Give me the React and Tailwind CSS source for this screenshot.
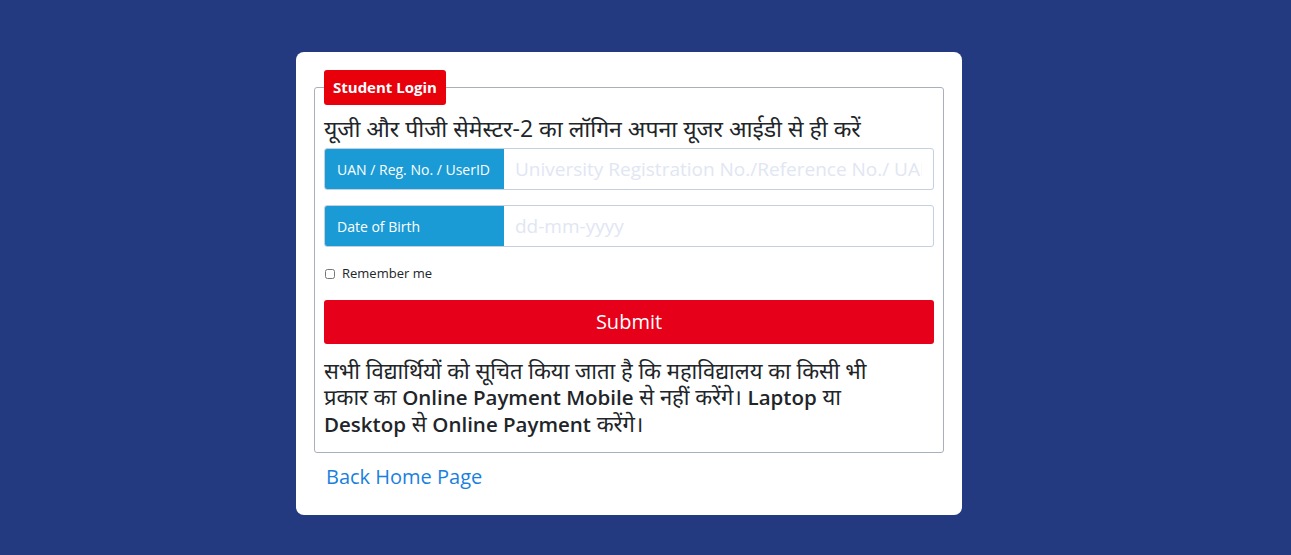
import React, { useState } from 'react';

const App = () => {
  const [remember, setRemember] = useState(false);

  return (
    <div
      className="min-h-[555px] w-full bg-[#243a80] pt-[52px]"
      style={{ fontFamily: '"Open Sans", "Noto Sans", "Liberation Sans", sans-serif' }}
    >
      <div className="ml-[296px] w-[666px] rounded-lg bg-white px-[18px] pb-[24px] pt-[18px]">
        <fieldset className="rounded-[3px] border border-[#a9b0bd] px-[9px] pb-[16px]">
          <legend className="rounded-[3px] bg-[#e8000b] px-[9px] py-[7px] text-[15px] font-bold leading-[21px] text-white">
            Student Login
          </legend>
          <p className="mt-[7px] text-[23px] leading-[32px] text-[#212529]">
            यूजी और पीजी सेमेस्टर-2 का लॉगिन अपना यूजर आईडी से ही करें
          </p>

          <div className="mt-[4px] flex h-[42px] overflow-hidden rounded-[3px] border border-[#c5cfe0]">
            <span className="flex w-[179px] shrink-0 items-center bg-[#1a9bd6] px-[12px] text-[14px] text-white">
              UAN / Reg. No. / UserID
            </span>
            <input
              type="text"
              placeholder="University Registration No./Reference No./ UAN"
              className="min-w-0 flex-1 px-[11px] text-[19px] text-[#495057] outline-none placeholder:text-[#e1e6f3]"
            />
          </div>

          <div className="mt-[15px] flex h-[42px] overflow-hidden rounded-[3px] border border-[#c5cfe0]">
            <span className="flex w-[179px] shrink-0 items-center bg-[#1a9bd6] px-[12px] text-[14px] text-white">
              Date of Birth
            </span>
            <input
              type="text"
              placeholder="dd-mm-yyyy"
              className="min-w-0 flex-1 px-[11px] text-[19px] text-[#495057] outline-none placeholder:text-[#e1e6f3]"
            />
          </div>

          <label className="mt-[17px] flex items-center gap-[7px] text-[13px] text-[#212529]">
            <input
              type="checkbox"
              checked={remember}
              onChange={(e) => setRemember(e.target.checked)}
              className="ml-[1px] h-[10px] w-[10px]"
            />
            Remember me
          </label>

          <button
            type="submit"
            className="mt-[16px] h-[44px] w-full rounded-[3px] bg-[#e60019] text-[20px] text-white"
          >
            Submit
          </button>

          <p className="mt-[13px] max-w-[575px] text-[22px] leading-[26.5px] text-[#212529]">
            सभी विद्यार्थियों को सूचित किया जाता है कि महाविद्यालय का किसी भी प्रकार का{' '}
            <b className="text-[20.5px] font-semibold leading-[20px]">Online Payment Mobile</b> से नहीं करेंगे।{' '}
            <b className="text-[20.5px] font-semibold leading-[20px]">Laptop</b> या{' '}
            <b className="text-[20.5px] font-semibold leading-[20px]">Desktop</b> से{' '}
            <b className="text-[20.5px] font-semibold leading-[20px]">Online Payment</b> करेंगे।
          </p>
        </fieldset>

        <a href="#" className="ml-[12px] mt-[10px] inline-block text-[20px] leading-[28px] text-[#1a7fe0]">
          Back Home Page
        </a>
      </div>
    </div>
  );
};

export default App;
